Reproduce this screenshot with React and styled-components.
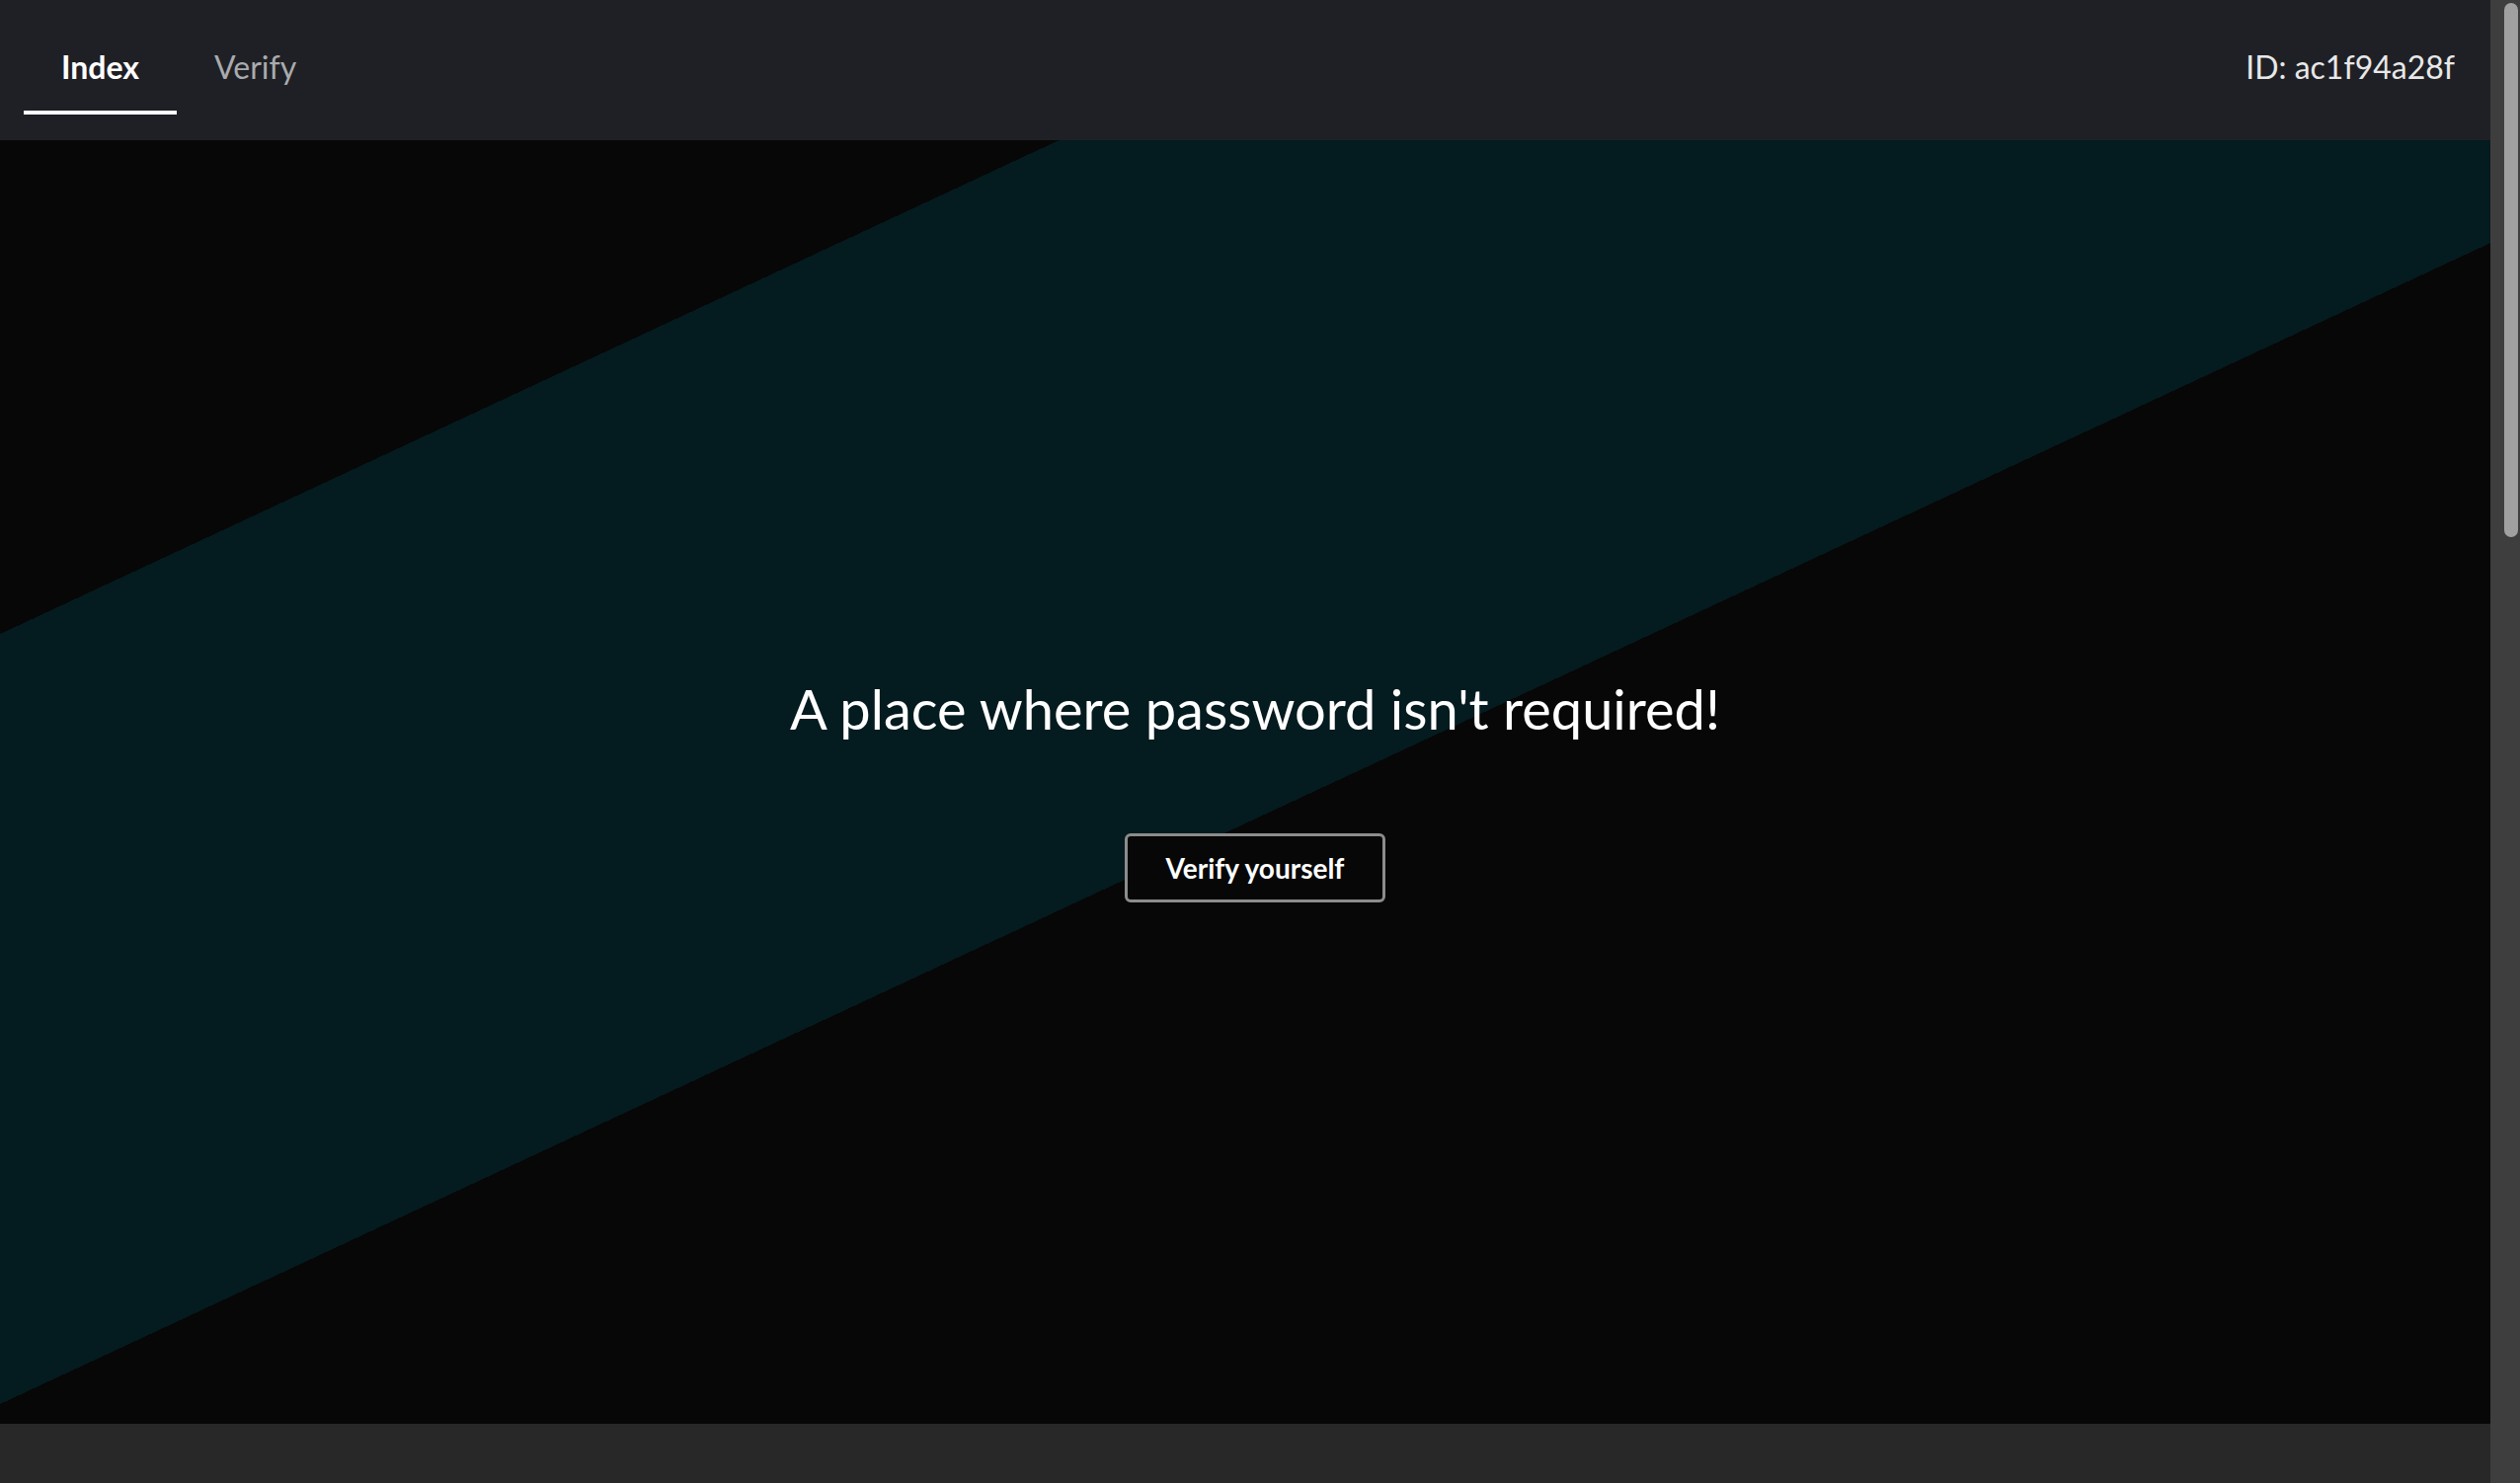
import styled, { createGlobalStyle } from "styled-components";

const GlobalStyle = createGlobalStyle`
    html, body {
        margin: 0;
        background: #282828;
    }
    body {
        font-family: Lato, "Open Sans", sans-serif;
        color: #fff;
    }
`;

const Frame = styled.div`
    display: flex;
    height: 100vh;
    overflow: hidden;
`;

const Page = styled.div`
    flex: 1;
    display: flex;
    flex-direction: column;
    min-width: 0;
`;

const ScrollTrack = styled.div`
    width: 30px;
    flex-shrink: 0;
    box-sizing: border-box;
    padding: 3px 2px 0 14px;
    background: #3e3e3e;
`;

const ScrollThumb = styled.div`
    height: 541px;
    border-radius: 7px;
    background: #a0a0a0;
`;

const Header = styled.header`
    display: flex;
    align-items: flex-start;
    justify-content: space-between;
    flex-shrink: 0;
    height: 142px;
    padding: 0 36px 0 24px;
    box-sizing: border-box;
    background: #1f2025;
`;

const Nav = styled.nav`
    display: flex;
`;

const Tab = styled.a`
    display: block;
    box-sizing: border-box;
    height: 116px;
    padding: 49px 38px 0;
    font-size: 32px;
    line-height: 1.2;
    font-weight: ${(p) => (p.active ? 700 : 400)};
    color: ${(p) => (p.active ? "#ffffff" : "#a9abae")};
    border-bottom: 4px solid ${(p) => (p.active ? "#ffffff" : "transparent")};
    text-decoration: none;
    cursor: pointer;
`;

const UserId = styled.div`
    padding-top: 49px;
    font-size: 32px;
    line-height: 1.2;
    color: #e8e8e8;
`;

const Hero = styled.main`
    display: flex;
    flex-direction: column;
    align-items: center;
    justify-content: center;
    flex-shrink: 0;
    gap: 92px;
    height: 1300px;
    padding: 14px 0 0 20px;
    box-sizing: border-box;
    background: linear-gradient(
        155deg,
        #070707 20.2%,
        #041b1f 20.2%,
        #041b1f 51.7%,
        #070707 51.7%
    );
`;

const Title = styled.h1`
    margin: 0;
    font-size: 56px;
    line-height: 1.2;
    font-weight: 400;
    color: #ffffff;
`;

const VerifyButton = styled.button`
    width: 264px;
    height: 70px;
    border: 3px solid #8c8c8c;
    border-radius: 6px;
    background: #070707;
    color: #ffffff;
    font-family: Lato, "Open Sans", sans-serif;
    font-size: 28px;
    font-weight: 700;
    cursor: pointer;
`;

const Rest = styled.section`
    flex: 1;
    background: #282828;
`;

function App() {
    return (
        <>
            <GlobalStyle />
            <Frame>
                <Page>
                    <Header>
                        <Nav>
                            <Tab active>Index</Tab>
                            <Tab>Verify</Tab>
                        </Nav>
                        <UserId>ID: ac1f94a28f</UserId>
                    </Header>
                    <Hero>
                        <Title>A place where password isn't required!</Title>
                        <VerifyButton>Verify yourself</VerifyButton>
                    </Hero>
                    <Rest />
                </Page>
                <ScrollTrack>
                    <ScrollThumb />
                </ScrollTrack>
            </Frame>
        </>
    );
}

export default App;
